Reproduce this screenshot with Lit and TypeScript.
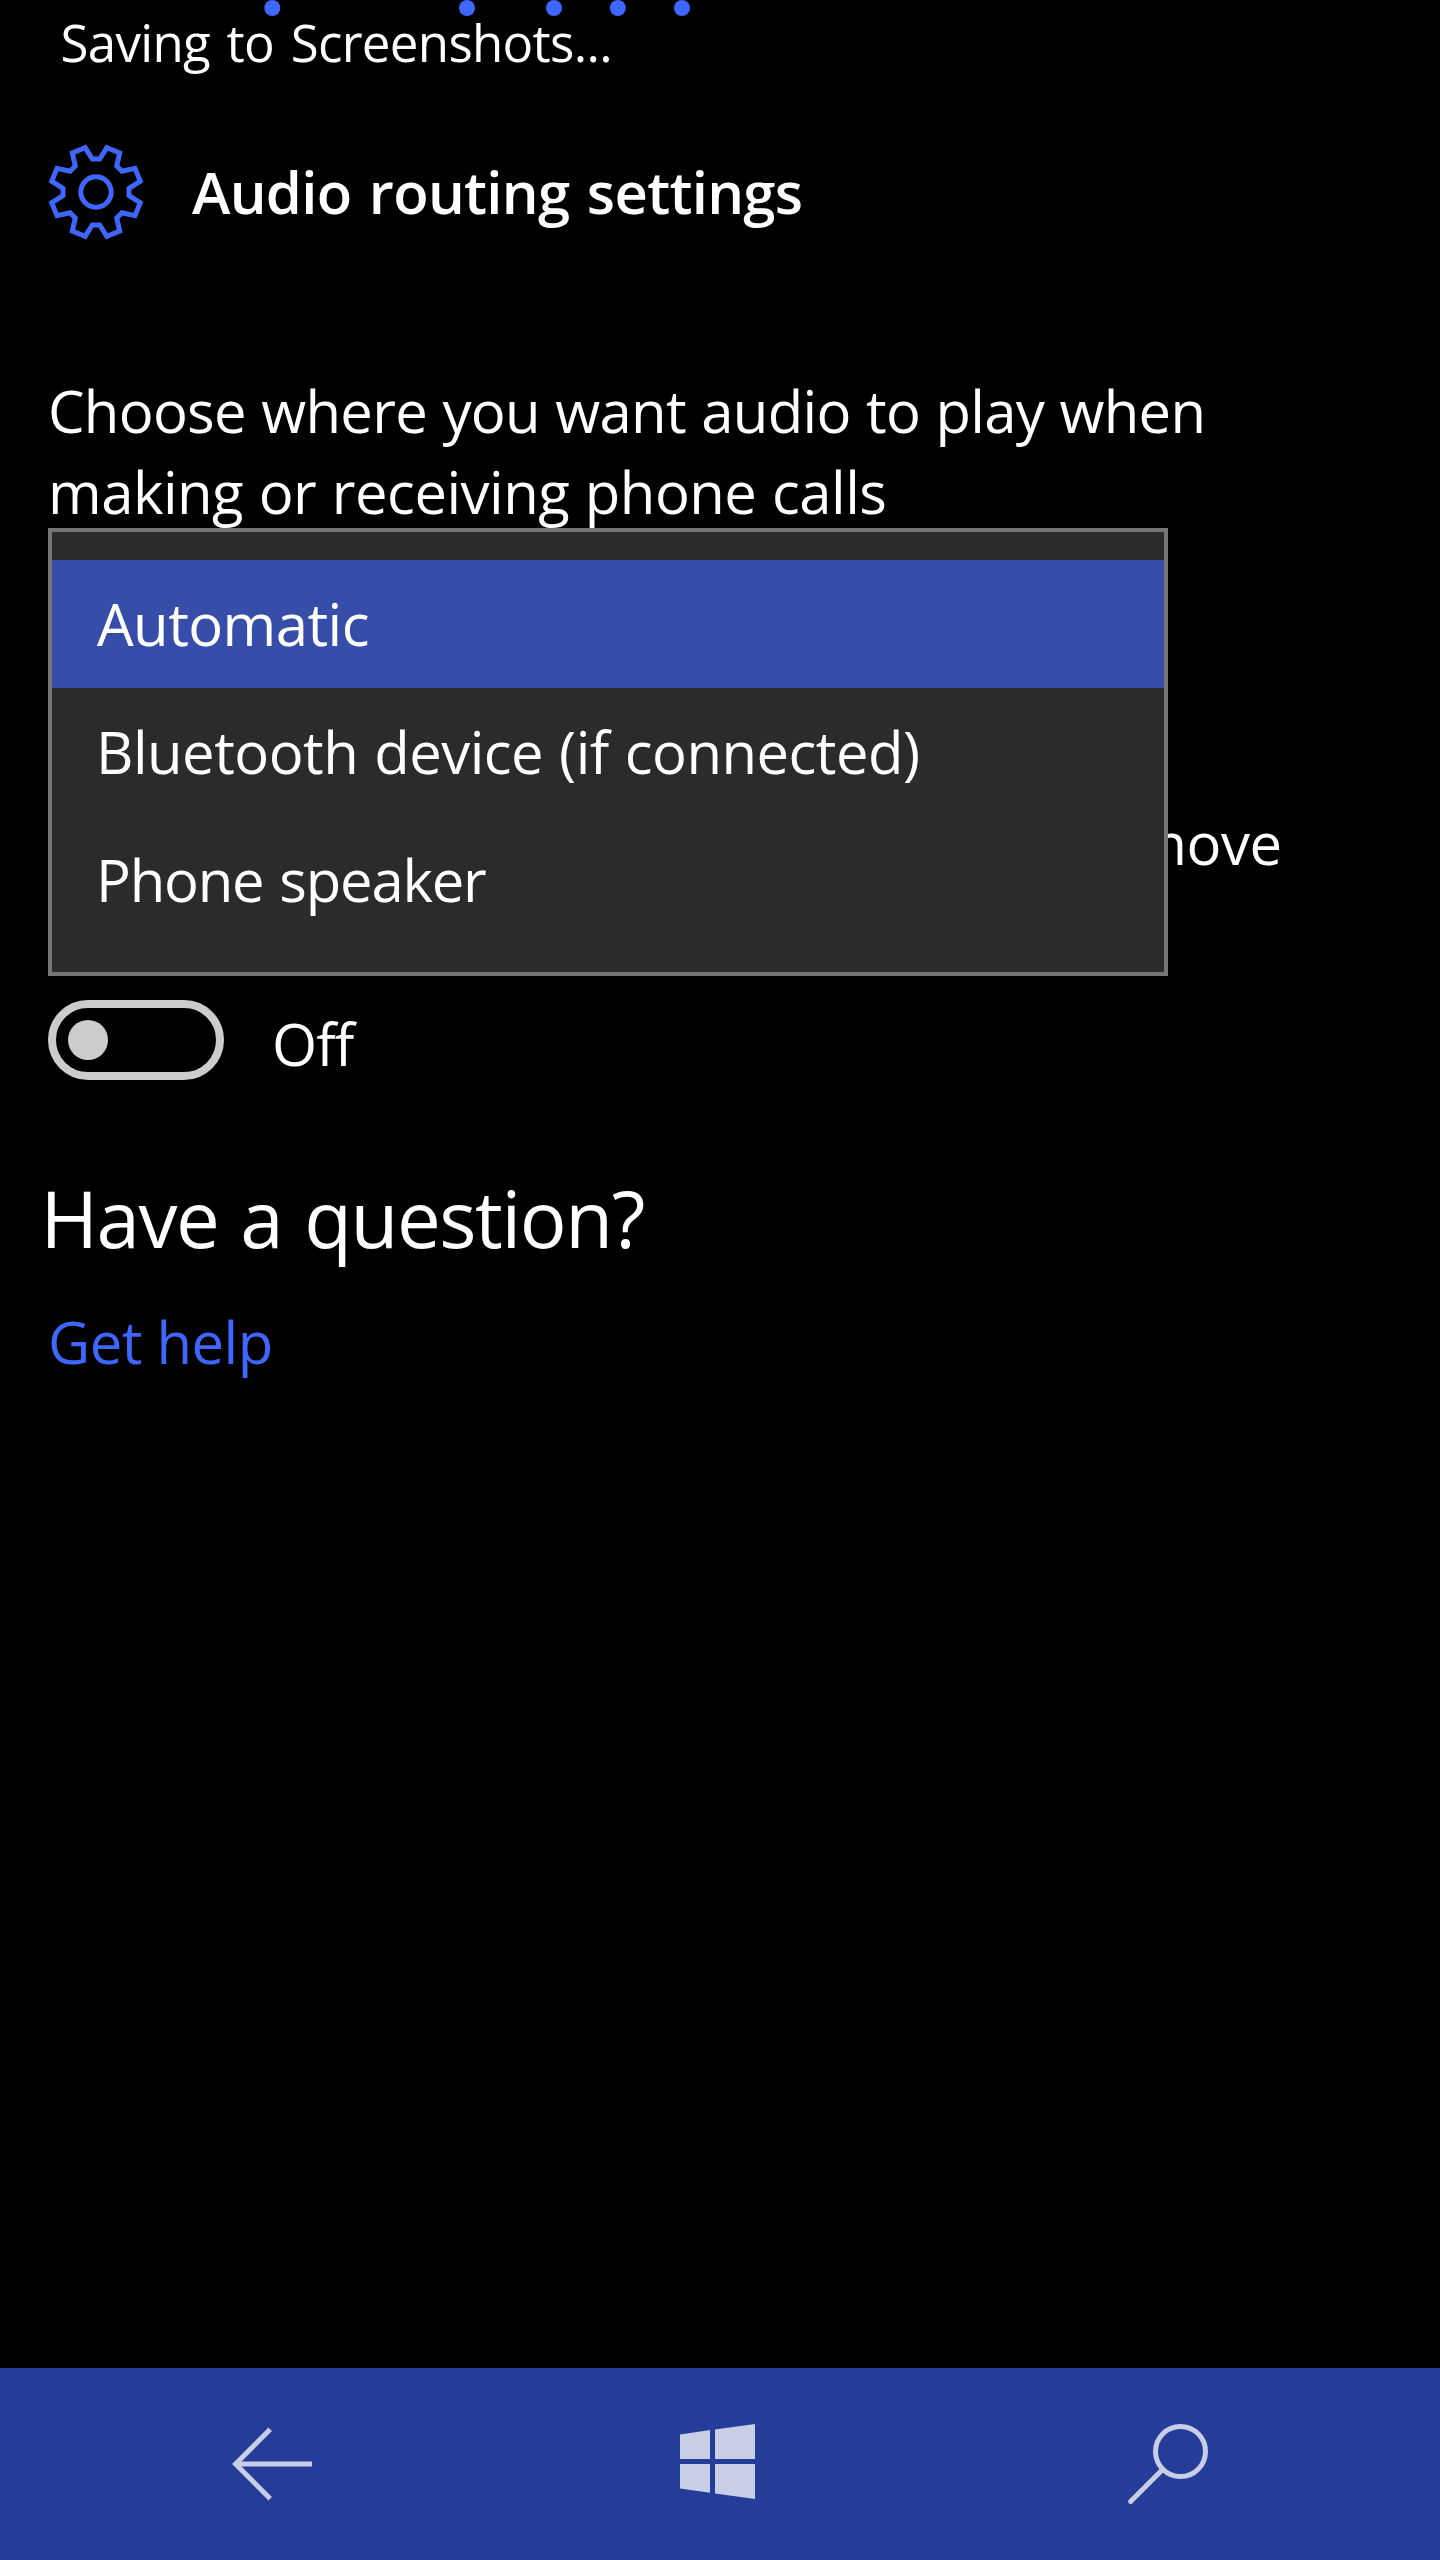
import { LitElement, html, css, svg } from "lit";
import { customElement, property, state } from "lit/decorators.js";
import { classMap } from "lit/directives/class-map.js";

const DOTS = [272.3, 467, 554, 617.8, 682];

// The gear outline repeats one notch and one tooth every 45 degrees.
const gearPoints = (): string => {
  const segment = [
    [-10.8, -44.3],
    [-3.7, -33],
    [3.7, -33],
    [10.8, -44.3],
  ];
  const out: string[] = [];
  for (let i = 0; i < 8; i++) {
    const a = (i * Math.PI) / 4;
    for (const [x, y] of segment) {
      const px = 48 + x * Math.cos(a) - y * Math.sin(a);
      const py = 48 + x * Math.sin(a) + y * Math.cos(a);
      out.push(`${px.toFixed(2)},${py.toFixed(2)}`);
    }
  }
  return out.join(" ");
};

@customElement("toggle-switch")
export class ToggleSwitch extends LitElement {
  @property() label = "Off";

  static styles = css`
    :host {
      display: flex;
      gap: 48px;
      height: 80px;
    }
    .track {
      box-sizing: border-box;
      display: flex;
      align-items: center;
      width: 176px;
      height: 80px;
      padding-left: 12px;
      border: 8px solid #cccccc;
      border-radius: 40px;
    }
    .knob {
      width: 40px;
      height: 40px;
      border-radius: 50%;
      background: #cccccc;
    }
    .label {
      line-height: 87px;
      letter-spacing: -0.9px;
    }
  `;

  render() {
    return html`
      <div class="track"><div class="knob"></div></div>
      <span class="label">${this.label}</span>
    `;
  }
}

@customElement("option-menu")
export class OptionMenu extends LitElement {
  @state() private selected = 0;

  private options = [
    { text: "Automatic", fit: "a" },
    { text: "Bluetooth device (if connected)", fit: "b" },
    { text: "Phone speaker", fit: "c" },
  ];

  static styles = css`
    :host {
      box-sizing: border-box;
      display: block;
      padding: 28px 0;
      border: 4px solid #767676;
      background: #2b2b2b;
    }
    .option {
      height: 128px;
      padding-left: 44px;
      line-height: 127px;
      white-space: nowrap;
    }
    .selected {
      background: #364da9;
    }
    .a {
      padding-left: 45px;
      letter-spacing: -0.55px;
    }
    .b {
      letter-spacing: -0.53px;
      word-spacing: 1.5px;
    }
    .c {
      letter-spacing: -1.2px;
      word-spacing: 2px;
    }
  `;

  render() {
    return this.options.map(
      (o, i) => html`<div
        class=${classMap({ option: true, selected: i === this.selected, [o.fit]: true })}
        @click=${() => (this.selected = i)}
      >${o.text}</div>`
    );
  }
}

@customElement("nav-bar")
export class NavBar extends LitElement {
  static styles = css`
    :host {
      display: grid;
      grid-template-columns: 540px 360px 540px;
      height: 192px;
      background: #253c98;
    }
    .key {
      display: flex;
      align-items: center;
      justify-content: center;
    }
    svg {
      display: block;
      width: 96px;
      height: 96px;
      fill: none;
      stroke: #c8cee6;
      stroke-width: 5;
    }
    .solid {
      fill: #c8cee6;
      stroke: none;
    }
  `;

  render() {
    return html`
      <div class="key">
        <svg viewBox="222 2416 96 96">
          <path d="M312 2464H236M270.2 2429.2L235.6 2464L270.2 2498.8" />
        </svg>
      </div>
      <div class="key">
        <svg class="solid" viewBox="672 2416 96 96">
          <path
            d="M680 2434.4L710 2430V2459H680ZM715 2429.4L755 2424V2459H715ZM680 2464H710V2492.8L680 2488.6ZM715 2464H755V2499L715 2493.6Z"
          />
        </svg>
      </div>
      <div class="key">
        <svg viewBox="1122 2416 96 96">
          <circle cx="1180.5" cy="2451.5" r="25" />
          <path stroke-linecap="round" d="M1162.6 2469.6L1130.6 2501.4" />
        </svg>
      </div>
    `;
  }
}

@customElement("app-root")
export class AppRoot extends LitElement {
  static styles = css`
    :host {
      box-sizing: border-box;
      display: flex;
      flex-direction: column;
      position: relative;
      width: 1440px;
      height: 2560px;
      overflow: hidden;
      background: #000000;
      color: #ffffff;
      font-family: "Open Sans", "Noto Sans", sans-serif;
      font-size: 58px;
      white-space: nowrap;
    }
    .progress {
      position: absolute;
      top: 0;
      left: 0;
      width: 1440px;
      height: 16px;
      fill: #3f66ff;
    }
    .status {
      height: 142px;
      padding: 2px 0 0 60.5px;
      font-size: 51px;
      line-height: 80px;
      letter-spacing: -0.68px;
      word-spacing: 4px;
    }
    main {
      display: flex;
      flex: 1;
      flex-direction: column;
      padding-left: 48px;
    }
    header {
      display: flex;
      gap: 48px;
      height: 96px;
    }
    .gear {
      width: 96px;
      height: 96px;
      fill: none;
      stroke: #3f66ff;
      stroke-width: 5;
    }
    h1,
    h2,
    p {
      margin: 0;
      font-size: inherit;
      font-weight: 400;
    }
    h1 {
      font-weight: 600;
      line-height: 95px;
      letter-spacing: -0.68px;
      word-spacing: 3px;
    }
    .prompt {
      margin-top: 131px;
      line-height: 80.5px;
      letter-spacing: -0.7px;
      word-spacing: 1px;
    }
    .second {
      letter-spacing: -0.5px;
    }
    .detail {
      margin-top: 270px;
      padding-left: 1085.2px;
      line-height: 81px;
      letter-spacing: -0.4px;
    }
    toggle-switch {
      margin-top: 117px;
    }
    h2 {
      margin: 84px 0 0 -7.5px;
      font-size: 78px;
      line-height: 108px;
      letter-spacing: -1.4px;
      word-spacing: 3px;
    }
    .help {
      align-self: flex-start;
      margin-top: 30px;
      color: #3f66ff;
      line-height: 80px;
      letter-spacing: -0.5px;
      text-decoration: none;
    }
    option-menu {
      position: absolute;
      top: 528px;
      left: 48px;
      width: 1120px;
      height: 448px;
    }
  `;

  render() {
    return html`
      <svg class="progress" viewBox="0 0 1440 16">
        ${DOTS.map((x) => svg`<circle cx=${x} cy="8" r="8" />`)}
      </svg>
      <div class="status">Saving to Screenshots...</div>
      <main>
        <header>
          <svg class="gear" viewBox="0 0 96 96">
            <polygon points=${gearPoints()} />
            <circle cx="48" cy="48" r="15.2" />
          </svg>
          <h1>Audio routing settings</h1>
        </header>
        <p class="prompt">
          Choose where you want audio to play when<br /><span class="second"
            >making or receiving phone calls</span
          >
        </p>
        <p class="detail">move</p>
        <toggle-switch label="Off"></toggle-switch>
        <h2>Have a question?</h2>
        <a class="help">Get help</a>
      </main>
      <option-menu></option-menu>
      <nav-bar></nav-bar>
    `;
  }
}
